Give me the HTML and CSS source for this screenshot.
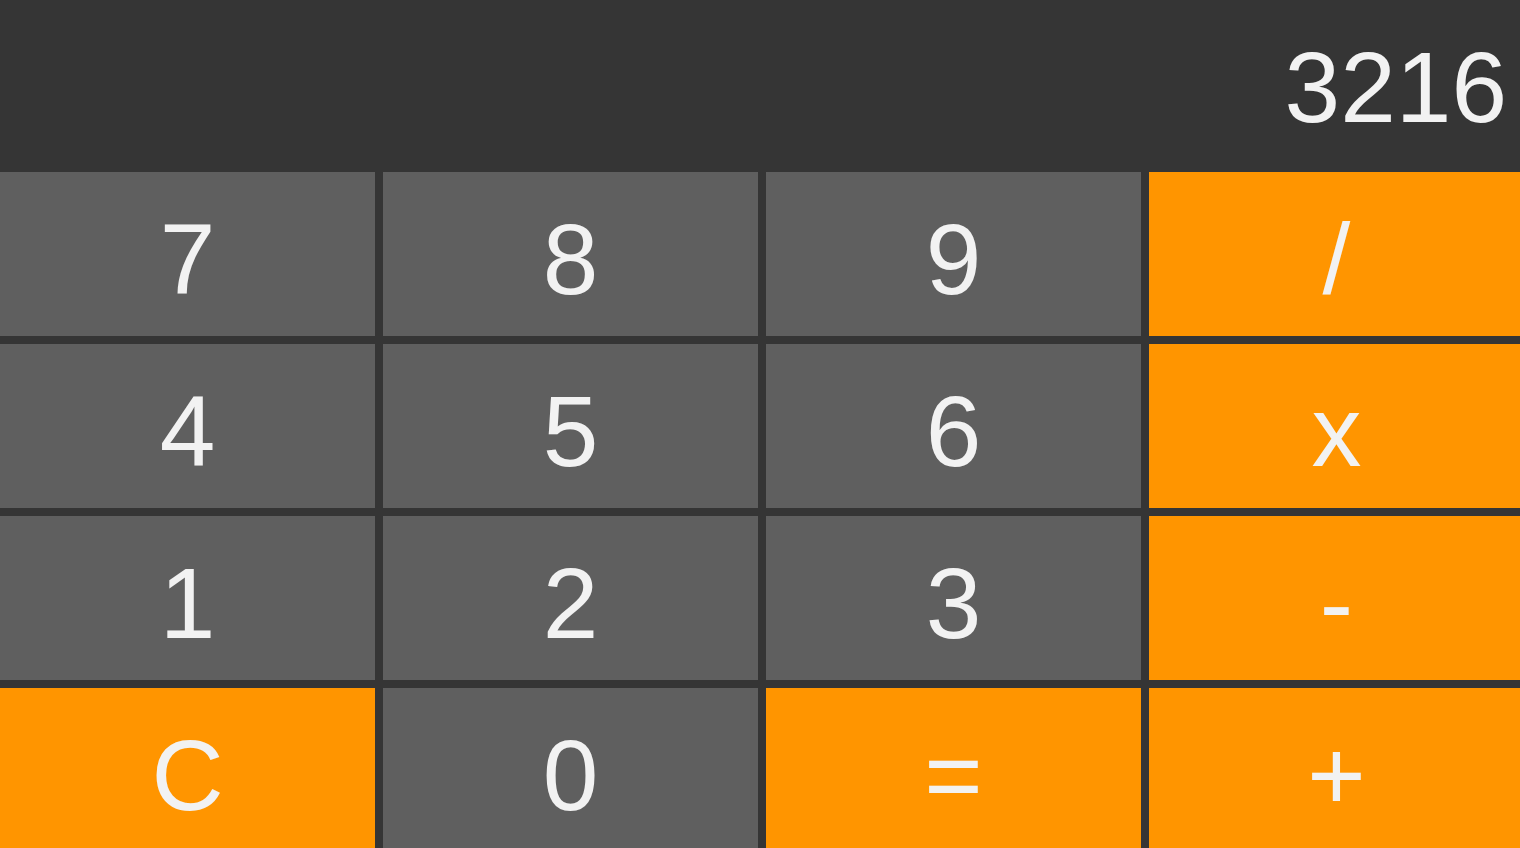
FILE: index.html
```html
<!DOCTYPE html>
<html>
<head>
<meta charset="utf-8">
<link rel="stylesheet" href="styles.css">
</head>
<body>
<div class="calc">
  <div class="display"><span class="value">3216</span></div>
  <div class="keys">
    <div class="key num">7</div>
    <div class="key num">8</div>
    <div class="key num">9</div>
    <div class="key op">/</div>
    <div class="key num">4</div>
    <div class="key num">5</div>
    <div class="key num">6</div>
    <div class="key op">x</div>
    <div class="key num">1</div>
    <div class="key num">2</div>
    <div class="key num">3</div>
    <div class="key op">-</div>
    <div class="key op">C</div>
    <div class="key num">0</div>
    <div class="key op">=</div>
    <div class="key op">+</div>
  </div>
</div>
</body>
</html>
```

FILE: styles.css
```css
html, body {
  margin: 0;
  padding: 0;
  background: #353535;
  overflow: hidden;
  width: 1520px;
  height: 848px;
}
.calc {
  font-family: "Liberation Sans", Arial, sans-serif;
  color: #f2f2f2;
  background: #353535;
}
.display {
  height: 172px;
  display: flex;
  align-items: center;
  justify-content: flex-end;
  padding-right: 13px;
  padding-top: 2px;
  box-sizing: border-box;
}
.value {
  font-size: 100px;
  line-height: 1;
}
.keys {
  display: grid;
  grid-template-columns: repeat(4, 375px);
  grid-auto-rows: 164px;
  gap: 8px;
}
.key {
  display: flex;
  align-items: center;
  justify-content: center;
  font-size: 100px;
  line-height: 1;
  padding-top: 10px;
  box-sizing: border-box;
}
.num {
  background: #5f5f5f;
}
.op {
  background: #ff9500;
}
```
